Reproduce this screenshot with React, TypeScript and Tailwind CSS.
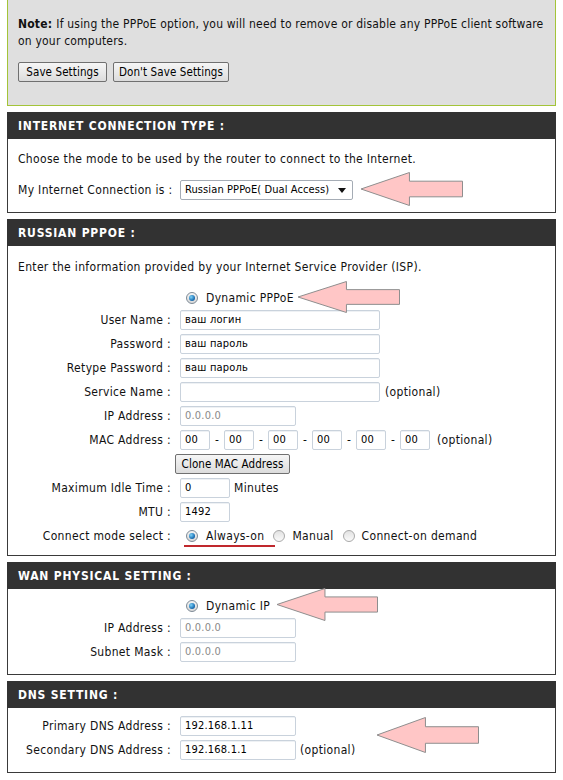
import type { ReactNode } from 'react';

const FONT = "font-['DejaVu_Sans_Condensed','DejaVu_Sans',sans-serif]";

function Radio({ checked }: { checked?: boolean }) {
  return checked ? (
    <span className="inline-flex h-[12px] w-[12px] shrink-0 items-center justify-center rounded-full border border-[#7d8a96] bg-gradient-to-b from-[#f4f4f4] to-[#d9d9d9]">
      <span className="h-[6px] w-[6px] rounded-full bg-[radial-gradient(circle_at_35%_35%,#7fd3f7,#1f74b8_60%,#0b3f73)]" />
    </span>
  ) : (
    <span className="inline-flex h-[12px] w-[12px] shrink-0 rounded-full border border-[#a9a9a9] bg-gradient-to-b from-[#e2e2e2] to-[#fafafa]" />
  );
}

function TextInput({ value, width, muted }: { value?: string; width: string; muted?: boolean }) {
  return (
    <div
      className={`flex h-[20px] items-center rounded-[2px] border border-[#c9d2dc] bg-white px-[4px] text-[11px] tracking-[0.2px] shadow-[inset_0_1px_0_#eef1f4] ${width} ${
        muted ? 'text-[#8a8a8a]' : 'text-black'
      }`}
    >
      {value}
    </div>
  );
}

function Btn({ children, className = '' }: { children: ReactNode; className?: string }) {
  return (
    <div
      className={`flex h-[20px] items-center justify-center rounded-[2px] border border-[#707070] bg-gradient-to-b from-[#f6f6f6] to-[#dcdcdc] text-[11.5px] tracking-[0.1px] text-black ${className}`}
    >
      {children}
    </div>
  );
}

function Row({ label, children, h = 'h-[24px]' }: { label?: string; children: ReactNode; h?: string }) {
  return (
    <div className={`flex items-center ${h}`}>
      <div className="w-[153px] shrink-0 text-right whitespace-nowrap">{label}</div>
      <div className="ml-[9px] flex items-center whitespace-nowrap">{children}</div>
    </div>
  );
}

function Section({ title, children, className = '' }: { title: string; children: ReactNode; className?: string }) {
  return (
    <div className="mt-[6px]">
      <div className="flex h-[27px] items-center bg-[#323232] pl-[11px] text-[12px] font-bold tracking-[0.8px] text-white">
        {title}
      </div>
      <div className={`border-x border-b border-[#3a3a3a] pl-[10px] ${className}`}>{children}</div>
    </div>
  );
}

function Arrow({ left, top, w = 103, h = 34 }: { left: number; top: number; w?: number; h?: number }) {
  const head = w * 0.48;
  const t1 = h * 0.27;
  const t2 = h * 0.73;
  return (
    <svg
      className="pointer-events-none absolute"
      style={{ left, top }}
      width={w}
      height={h}
      viewBox={`0 0 ${w} ${h}`}
    >
      <polygon
        points={`1,${h / 2} ${head},0.5 ${head},${t1} ${w - 0.5},${t1} ${w - 0.5},${t2} ${head},${t2} ${head},${h - 0.5}`}
        fill="#ffc6c6"
        stroke="#8e8e8e"
        strokeWidth="1"
      />
    </svg>
  );
}

export default function App() {
  return (
    <div
      className={`relative min-h-[780px] w-[563px] bg-white text-[12px] leading-[16px] tracking-[0.33px] text-[#111] ${FONT}`}
    >
      <div className="px-[7px]">
        {/* note box */}
        <div className="h-[106px] border-x border-b border-[#a3c438] bg-[#dfdfdf] px-[10px] pt-[16px]">
          <div className="leading-[17px] tracking-[0.2px]">
            <div className="flex whitespace-nowrap">
              <b className="mr-[4px]">Note:</b>
              <span>If using the PPPoE option, you will need to remove or disable any PPPoE client software</span>
            </div>
            <div>on your computers.</div>
          </div>
          <div className="mt-[12px] flex gap-[6px]">
            <Btn className="w-[89px]">Save Settings</Btn>
            <Btn className="w-[116px]">Don't Save Settings</Btn>
          </div>
        </div>

        <Section title="INTERNET CONNECTION TYPE :" className="pt-[12px] pb-[11px]">
          <p>Choose the mode to be used by the router to connect to the Internet.</p>
          <div className="mt-[12px]">
            <Row label="My Internet Connection is :" h="h-[22px]">
              <div className="flex h-[20px] w-[173px] items-center justify-between rounded-[2px] border border-[#a5acb5] bg-white pl-[4px] pr-[6px] text-[11px] tracking-[0.1px] text-black">
                <span>Russian PPPoE( Dual Access)</span>
                <svg width="8" height="5" viewBox="0 0 8 5">
                  <polygon points="0,0 8,0 4,5" fill="#111" />
                </svg>
              </div>
            </Row>
          </div>
        </Section>

        <Section title="RUSSIAN PPPOE :" className="pt-[13px] pb-[7px]">
          <p>Enter the information provided by your Internet Service Provider (ISP).</p>
          <div className="mt-[13px]">
            <Row h="h-[20px]">
              <span className="ml-[6px] flex items-center gap-[8px]">
                <Radio checked />
                <span>Dynamic PPPoE</span>
              </span>
            </Row>
            <Row label="User Name :">
              <TextInput width="w-[200px]" value="ваш логин" />
            </Row>
            <Row label="Password :">
              <TextInput width="w-[200px]" value="ваш пароль" />
            </Row>
            <Row label="Retype Password :">
              <TextInput width="w-[200px]" value="ваш пароль" />
            </Row>
            <Row label="Service Name :">
              <TextInput width="w-[200px]" />
              <span className="ml-[5px]">(optional)</span>
            </Row>
            <Row label="IP Address :">
              <TextInput width="w-[116px]" value="0.0.0.0" muted />
            </Row>
            <Row label="MAC Address :">
              {['00', '00', '00', '00', '00', '00'].map((v, i) => (
                <span key={i} className="flex items-center">
                  {i > 0 && <span className="w-[14px] text-center">-</span>}
                  <TextInput width="w-[30px]" value={v} />
                </span>
              ))}
              <span className="ml-[7px]">(optional)</span>
            </Row>
            <Row>
              <Btn className="-ml-[5px] w-[115px]">Clone MAC Address</Btn>
            </Row>
            <Row label="Maximum Idle Time :">
              <TextInput width="w-[50px]" value="0" />
              <span className="ml-[4px]">Minutes</span>
            </Row>
            <Row label="MTU :">
              <TextInput width="w-[50px]" value="1492" />
            </Row>
            <Row label="Connect mode select :">
              <span className="relative ml-[6px] flex items-center gap-[8px]">
                <Radio checked />
                <span>Always-on</span>
                <span className="absolute top-[17px] -left-[2px] h-[2px] w-[91px] bg-[#c0282d]" />
              </span>
              <span className="ml-[9px] flex items-center gap-[7px]">
                <Radio />
                <span>Manual</span>
              </span>
              <span className="ml-[9px] flex items-center gap-[7px]">
                <Radio />
                <span>Connect-on demand</span>
              </span>
            </Row>
          </div>
        </Section>

        <Section title="WAN PHYSICAL SETTING :" className="pt-[7px] pb-[10px]">
          <Row h="h-[20px]">
            <span className="ml-[6px] flex items-center gap-[8px]">
              <Radio checked />
              <span>Dynamic IP</span>
            </span>
          </Row>
          <Row label="IP Address :">
            <TextInput width="w-[116px]" value="0.0.0.0" muted />
          </Row>
          <Row label="Subnet Mask :">
            <TextInput width="w-[116px]" value="0.0.0.0" muted />
          </Row>
        </Section>

        <Section title="DNS SETTING :" className="pt-[6px] pb-[10px]">
          <Row label="Primary DNS Address :">
            <TextInput width="w-[116px]" value="192.168.1.11" />
          </Row>
          <Row label="Secondary DNS Address :">
            <TextInput width="w-[116px]" value="192.168.1.1" />
            <span className="ml-[4px]">(optional)</span>
          </Row>
        </Section>
      </div>

      {/* annotation arrows */}
      <Arrow left={360} top={172} w={103} h={34} />
      <Arrow left={297} top={281} w={103} h={32} />
      <Arrow left={276} top={588} w={102} h={33} />
      <Arrow left={376} top={717} w={103} h={36} />
    </div>
  );
}
